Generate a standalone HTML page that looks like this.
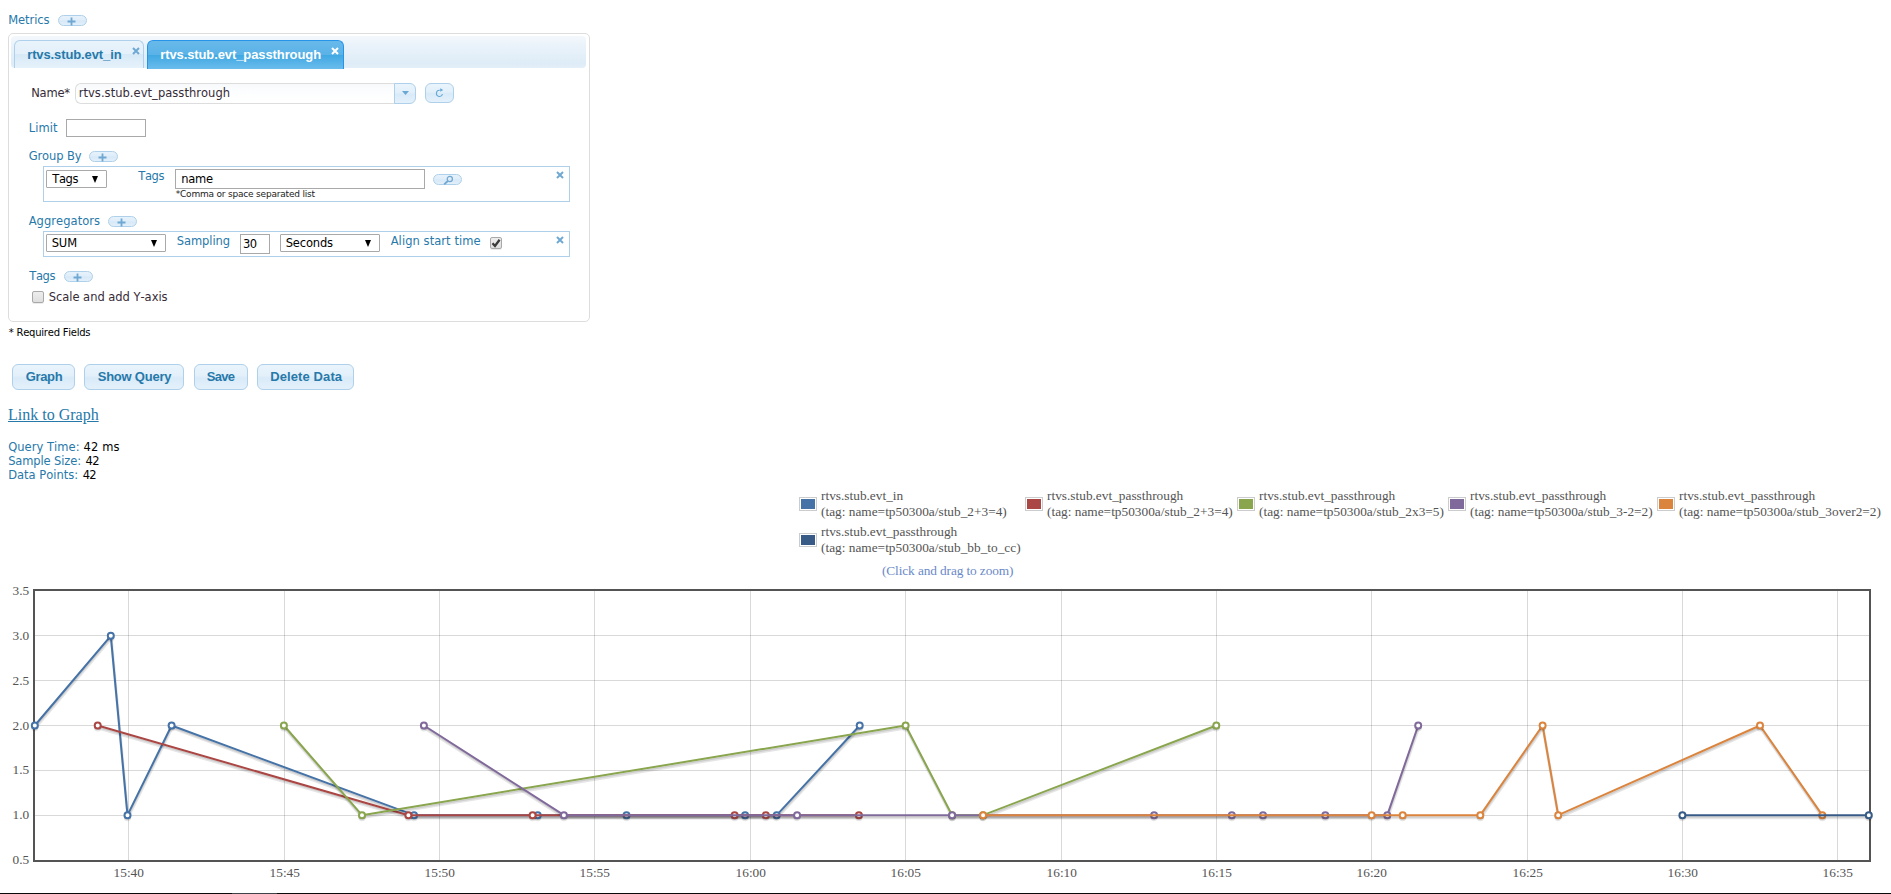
<!DOCTYPE html>
<html lang="en">
<head>
<meta charset="utf-8">
<title>KairosDB</title>
<style>
html,body{margin:0;padding:0;background:#fff;}
body{position:relative;width:1891px;height:894px;overflow:hidden;font-family:"DejaVu Sans","Liberation Sans",sans-serif;font-size:12px;}
*{box-sizing:border-box;}
.a{position:absolute;}
.t{position:absolute;white-space:pre;line-height:20px;margin:0;padding:0;font-kerning:none;}
ul,li{list-style:none;margin:0;padding:0;}
.panel{left:8px;top:33px;width:582px;height:289px;border:1px solid #ddd;border-radius:5px;background:#fff;}
.nav{left:11px;top:36px;width:575px;height:32px;border-radius:4px;background:linear-gradient(#f3f8fc 0%,#eaf3fa 30%,#deecf7 85%,#e3eff8 100%);}
.tab{top:40px;height:28px;border:1px solid #aed0ea;border-bottom:0;border-radius:6px 6px 0 0;background:linear-gradient(#e8f3fb 0%,#e4f0fa 49%,#d7e9f7 50%,#e6f2fb 100%);}
.tab.on{height:29px;border-color:#2694e8;background:linear-gradient(#68b9ea 0%,#5ab2e7 49%,#3fa8e2 50%,#6bbcec 100%);}
.pill{height:11px;width:29px;border:1px solid #aed0ea;border-radius:6px;background:linear-gradient(#e6f2fb 0%,#e0eefa 44%,#d7e8f7 54%,#e2f0fa 100%);}
.box{left:43px;width:527px;border:1px solid #aed0ea;background:#fff;}
.inp{border:1px solid #a9a9a9;background:#fff;}
.sel{border:1px solid #a9a9a9;background:#fff;height:18px;border-radius:1px;}
.sel i{position:absolute;right:7.7px;top:5px;width:0;height:0;border-left:3.8px solid transparent;border-right:3.8px solid transparent;border-top:7px solid #000;}
.cb{width:12px;height:12px;border:1px solid #a9a9a9;border-radius:2px;background:linear-gradient(#ededed,#dedede);box-shadow:0 1px 0 rgba(0,0,0,.08);}
.btn{top:364px;height:26px;border:1px solid #aed0ea;border-radius:6px;background:linear-gradient(#e9f4fc 0%,#e3f0fa 44%,#d9eaf8 54%,#e4f1fb 100%);}
.combo{left:75px;top:83px;width:320px;height:21px;border:1px solid #ddd;border-right:0;border-radius:6px 0 0 6px;background:linear-gradient(#f7f9fb,#fcfdfe 40%,#fff);}
.cbtn{left:394px;top:83px;width:22px;height:21px;border:1px solid #aed0ea;border-radius:0 6px 6px 0;background:linear-gradient(#e9f4fc 0%,#e3f0fa 44%,#d9eaf8 54%,#e4f1fb 100%);}
.rbtn{left:425px;top:83px;width:29px;height:20px;border:1px solid #aed0ea;border-radius:6px;background:linear-gradient(#e9f4fc 0%,#e3f0fa 44%,#d9eaf8 54%,#e4f1fb 100%);}
svg{position:absolute;overflow:visible;}
.sw{width:18px;height:14px;border:1px solid #ccc;padding:1px;background:#fff;}
.sw div{width:14px;height:10px;}

</style>
</head>
<body>
<div id="metricContainer">
<span class="t " style="left:8.2px;top:10px;font-family:'DejaVu Sans','Liberation Sans',sans-serif;font-size:11.5px;color:#2779aa;letter-spacing:-0.058px;">Metrics</span>
<div class="a pill" style="left:58px;top:15px"><svg width="9" height="9" viewBox="0 0 9 9" style="left:8.4px;top:1.4px"><path d="M3.6 0.5h1.8v3.1h3.1v1.8h-3.1v3.1h-1.8v-3.1h-3.1v-1.8h3.1z" fill="#6fa9d3"/></svg></div>
<div class="a panel"></div>
<div class="a nav"></div>
<ul>
<li class="a tab" style="left:14px;width:130px"></li><span class="t " style="left:27.2px;top:45px;font-family:'Liberation Sans','DejaVu Sans',sans-serif;font-size:13px;color:#2779aa;font-weight:700;letter-spacing:-0.113px;">rtvs.stub.evt_in</span><svg class="a" width="8" height="8" viewBox="0 0 8 8" style="left:131.6px;top:46.6px"><path d="M1 1L7 7M7 1L1 7" stroke="#6fa9d3" stroke-width="2" fill="none"/></svg>
<li class="a tab on" style="left:147px;width:197px"></li><span class="t " style="left:160.2px;top:45px;font-family:'Liberation Sans','DejaVu Sans',sans-serif;font-size:13px;color:#fff;font-weight:700;letter-spacing:-0.099px;">rtvs.stub.evt_passthrough</span><svg class="a" width="8" height="8" viewBox="0 0 8 8" style="left:330.6px;top:46.6px"><path d="M1 1L7 7M7 1L1 7" stroke="#fff" stroke-width="2" fill="none"/></svg>
</ul>
<span class="t " style="left:31.2px;top:83px;font-family:'DejaVu Sans','Liberation Sans',sans-serif;font-size:11.5px;color:#362b36;letter-spacing:-0.197px;">Name*</span>
<div class="a combo"></div>
<span class="t " style="left:78.7px;top:83px;font-family:'DejaVu Sans','Liberation Sans',sans-serif;font-size:11.5px;color:#362b36;letter-spacing:0.044px;">rtvs.stub.evt_passthrough</span>
<div class="a cbtn"><svg width="7" height="4" viewBox="0 0 7 4" style="left:7px;top:7px"><path d="M0 0h7L3.5 4z" fill="#6aa8d4"/></svg></div>
<div class="a rbtn"><svg width="10" height="11" viewBox="0 0 10 11" style="left:8px;top:3px"><path d="M5.8 3.3A3.1 3.1 0 1 0 8.5 7.2" stroke="#65a9d6" stroke-width="1.1" fill="none"/><path d="M6.2 1.2L9.2 3 6.2 4.8z" fill="#65a9d6"/></svg></div>
<span class="t " style="left:28.7px;top:118px;font-family:'DejaVu Sans','Liberation Sans',sans-serif;font-size:11.5px;color:#2779aa;letter-spacing:0.096px;">Limit</span>
<div class="a inp" style="left:66px;top:119px;width:80px;height:18px"></div>
<span class="t " style="left:28.7px;top:146px;font-family:'DejaVu Sans','Liberation Sans',sans-serif;font-size:11.5px;color:#2779aa;letter-spacing:-0.104px;">Group By</span>
<div class="a pill" style="left:89px;top:151px"><svg width="9" height="9" viewBox="0 0 9 9" style="left:8.4px;top:1.4px"><path d="M3.6 0.5h1.8v3.1h3.1v1.8h-3.1v3.1h-1.8v-3.1h-3.1v-1.8h3.1z" fill="#6fa9d3"/></svg></div>
<div class="a box" style="top:166px;height:36px"></div>
<div class="a sel" style="left:46px;top:170px;width:61px"><i></i></div>
<span class="t " style="left:52.2px;top:169px;font-family:'DejaVu Sans','Liberation Sans',sans-serif;font-size:11.5px;color:#000;letter-spacing:-0.325px;">Tags</span>
<span class="t " style="left:138.2px;top:166px;font-family:'DejaVu Sans','Liberation Sans',sans-serif;font-size:11.5px;color:#2779aa;letter-spacing:-0.325px;">Tags</span>
<div class="a inp" style="left:175px;top:169px;width:250px;height:20px"></div>
<span class="t " style="left:181.2px;top:169px;font-family:'DejaVu Sans','Liberation Sans',sans-serif;font-size:11.5px;color:#000;letter-spacing:-0.242px;">name</span>
<div class="a pill" style="left:433px;top:174px"><svg width="11" height="10" viewBox="0 0 11 10" style="left:9px;top:0px"><circle cx="6.8" cy="4" r="2.6" stroke="#72a7cf" stroke-width="1.2" fill="none"/><path d="M4.8 6L1.2 9.3" stroke="#72a7cf" stroke-width="1.8" fill="none"/></svg></div>
<span class="t " style="left:175.7px;top:184px;font-family:'DejaVu Sans','Liberation Sans',sans-serif;font-size:9px;color:#222;letter-spacing:-0.195px;">*Comma or space separated list</span>
<svg class="a" width="8" height="8" viewBox="0 0 8 8" style="left:555.6px;top:170.6px"><path d="M1 1L7 7M7 1L1 7" stroke="#6fa9d3" stroke-width="2" fill="none"/></svg>
<span class="t " style="left:28.7px;top:211px;font-family:'DejaVu Sans','Liberation Sans',sans-serif;font-size:11.5px;color:#2779aa;letter-spacing:0.051px;">Aggregators</span>
<div class="a pill" style="left:108px;top:216px"><svg width="9" height="9" viewBox="0 0 9 9" style="left:8.4px;top:1.4px"><path d="M3.6 0.5h1.8v3.1h3.1v1.8h-3.1v3.1h-1.8v-3.1h-3.1v-1.8h3.1z" fill="#6fa9d3"/></svg></div>
<div class="a box" style="top:231px;height:26px"></div>
<div class="a sel" style="left:46px;top:234px;width:120px"><i></i></div>
<span class="t " style="left:51.7px;top:233px;font-family:'DejaVu Sans','Liberation Sans',sans-serif;font-size:11.5px;color:#000;letter-spacing:-0.120px;">SUM</span>
<span class="t " style="left:176.7px;top:231px;font-family:'DejaVu Sans','Liberation Sans',sans-serif;font-size:11.5px;color:#2779aa;letter-spacing:-0.061px;">Sampling</span>
<div class="a inp" style="left:240px;top:234px;width:30px;height:20px"></div>
<span class="t " style="left:243.1px;top:234px;font-family:'DejaVu Sans','Liberation Sans',sans-serif;font-size:11.5px;color:#000;letter-spacing:-0.741px;">30</span>
<div class="a sel" style="left:280px;top:234px;width:100px"><i></i></div>
<span class="t " style="left:285.7px;top:233px;font-family:'DejaVu Sans','Liberation Sans',sans-serif;font-size:11.5px;color:#000;letter-spacing:-0.155px;">Seconds</span>
<span class="t " style="left:390.7px;top:231px;font-family:'DejaVu Sans','Liberation Sans',sans-serif;font-size:11.5px;color:#2779aa;letter-spacing:0.064px;">Align start time</span>
<div class="a cb" style="left:490px;top:237px"><svg width="10" height="10" viewBox="0 0 10 10" style="left:0px;top:0px"><path d="M1.5 5.2L4 8 8.6 1.8" stroke="#3a3a3a" stroke-width="2.3" fill="none"/></svg></div>
<svg class="a" width="8" height="8" viewBox="0 0 8 8" style="left:555.6px;top:235.6px"><path d="M1 1L7 7M7 1L1 7" stroke="#6fa9d3" stroke-width="2" fill="none"/></svg>
<span class="t " style="left:29.2px;top:266px;font-family:'DejaVu Sans','Liberation Sans',sans-serif;font-size:11.5px;color:#2779aa;letter-spacing:-0.325px;">Tags</span>
<div class="a pill" style="left:64px;top:271px"><svg width="9" height="9" viewBox="0 0 9 9" style="left:8.4px;top:1.4px"><path d="M3.6 0.5h1.8v3.1h3.1v1.8h-3.1v3.1h-1.8v-3.1h-3.1v-1.8h3.1z" fill="#6fa9d3"/></svg></div>
<div class="a cb" style="left:32px;top:291px"></div>
<span class="t " style="left:48.7px;top:287px;font-family:'DejaVu Sans','Liberation Sans',sans-serif;font-size:11.5px;color:#362b36;letter-spacing:-0.027px;">Scale and add Y-axis</span>
</div>
<span class="t " style="left:8.7px;top:323px;font-family:'DejaVu Sans','Liberation Sans',sans-serif;font-size:10px;color:#000;letter-spacing:-0.229px;">* Required Fields</span>
<div class="a btn" style="left:12px;width:63px"></div><span class="t " style="left:25.7px;top:367px;font-family:'Liberation Sans','DejaVu Sans',sans-serif;font-size:13px;color:#2779aa;font-weight:700;letter-spacing:-0.349px;">Graph</span>
<div class="a btn" style="left:84px;width:100px"></div><span class="t " style="left:97.7px;top:367px;font-family:'Liberation Sans','DejaVu Sans',sans-serif;font-size:13px;color:#2779aa;font-weight:700;letter-spacing:-0.218px;">Show Query</span>
<div class="a btn" style="left:194px;width:54px"></div><span class="t " style="left:206.7px;top:367px;font-family:'Liberation Sans','DejaVu Sans',sans-serif;font-size:13px;color:#2779aa;font-weight:700;letter-spacing:-0.658px;">Save</span>
<div class="a btn" style="left:257px;width:97px"></div><span class="t " style="left:270.2px;top:367px;font-family:'Liberation Sans','DejaVu Sans',sans-serif;font-size:13px;color:#2779aa;font-weight:700;letter-spacing:0.109px;">Delete Data</span>
<a class="t " style="left:8.0px;top:404.5px;font-family:'Liberation Serif','DejaVu Serif',serif;font-size:16px;color:#2779aa;text-decoration:underline;">Link to Graph</a>
<span class="t " style="left:8.2px;top:437px;font-family:'DejaVu Sans','Liberation Sans',sans-serif;font-size:11.5px;color:#2779aa;letter-spacing:0.042px;">Query Time:</span><span class="t " style="left:83.5px;top:437px;font-family:'DejaVu Sans','Liberation Sans',sans-serif;font-size:11.5px;color:#000;letter-spacing:0.129px;">42 ms</span>
<span class="t " style="left:8.2px;top:451px;font-family:'DejaVu Sans','Liberation Sans',sans-serif;font-size:11.5px;color:#2779aa;letter-spacing:-0.124px;">Sample Size:</span><span class="t " style="left:85.6px;top:451px;font-family:'DejaVu Sans','Liberation Sans',sans-serif;font-size:11.5px;color:#000;letter-spacing:-0.641px;">42</span>
<span class="t " style="left:8.2px;top:465px;font-family:'DejaVu Sans','Liberation Sans',sans-serif;font-size:11.5px;color:#2779aa;">Data Points:</span><span class="t " style="left:82.7px;top:465px;font-family:'DejaVu Sans','Liberation Sans',sans-serif;font-size:11.5px;color:#000;letter-spacing:-0.741px;">42</span>
<div id="graphLegend">
<div class="a sw" style="left:799px;top:497px"><div style="background:#4572a7"></div></div><span class="t " style="left:821px;top:486px;font-family:'Liberation Serif','DejaVu Serif',serif;font-size:13.333px;color:#545454;">rtvs.stub.evt_in</span><span class="t " style="left:821px;top:502px;font-family:'Liberation Serif','DejaVu Serif',serif;font-size:13.333px;color:#545454;">(tag: name=tp50300a/stub_2+3=4)</span>
<div class="a sw" style="left:1025px;top:497px"><div style="background:#aa4643"></div></div><span class="t " style="left:1047px;top:486px;font-family:'Liberation Serif','DejaVu Serif',serif;font-size:13.333px;color:#545454;">rtvs.stub.evt_passthrough</span><span class="t " style="left:1047px;top:502px;font-family:'Liberation Serif','DejaVu Serif',serif;font-size:13.333px;color:#545454;">(tag: name=tp50300a/stub_2+3=4)</span>
<div class="a sw" style="left:1237px;top:497px"><div style="background:#89a54e"></div></div><span class="t " style="left:1259px;top:486px;font-family:'Liberation Serif','DejaVu Serif',serif;font-size:13.333px;color:#545454;">rtvs.stub.evt_passthrough</span><span class="t " style="left:1259px;top:502px;font-family:'Liberation Serif','DejaVu Serif',serif;font-size:13.333px;color:#545454;">(tag: name=tp50300a/stub_2x3=5)</span>
<div class="a sw" style="left:1448px;top:497px"><div style="background:#80699b"></div></div><span class="t " style="left:1470px;top:486px;font-family:'Liberation Serif','DejaVu Serif',serif;font-size:13.333px;color:#545454;">rtvs.stub.evt_passthrough</span><span class="t " style="left:1470px;top:502px;font-family:'Liberation Serif','DejaVu Serif',serif;font-size:13.333px;color:#545454;">(tag: name=tp50300a/stub_3-2=2)</span>
<div class="a sw" style="left:1657px;top:497px"><div style="background:#db843d"></div></div><span class="t " style="left:1679px;top:486px;font-family:'Liberation Serif','DejaVu Serif',serif;font-size:13.333px;color:#545454;">rtvs.stub.evt_passthrough</span><span class="t " style="left:1679px;top:502px;font-family:'Liberation Serif','DejaVu Serif',serif;font-size:13.333px;color:#545454;">(tag: name=tp50300a/stub_3over2=2)</span>
<div class="a sw" style="left:799px;top:533px"><div style="background:#375b86"></div></div><span class="t " style="left:821px;top:522px;font-family:'Liberation Serif','DejaVu Serif',serif;font-size:13.333px;color:#545454;">rtvs.stub.evt_passthrough</span><span class="t " style="left:821px;top:538px;font-family:'Liberation Serif','DejaVu Serif',serif;font-size:13.333px;color:#545454;">(tag: name=tp50300a/stub_bb_to_cc)</span>
</div>
<span class="t " style="left:882px;top:560.5px;font-family:'Liberation Serif','DejaVu Serif',serif;font-size:13.333px;color:#6a89c8;letter-spacing:-0.109px;">(Click and drag to zoom)</span>
<svg class="a" id="flotChart" width="1891" height="894" viewBox="0 0 1891 894" style="left:0;top:0">
<g fill="#545454" fill-opacity=".22">
<rect x="128" y="591" width="1" height="269"/>
<rect x="284" y="591" width="1" height="269"/>
<rect x="439" y="591" width="1" height="269"/>
<rect x="594" y="591" width="1" height="269"/>
<rect x="750" y="591" width="1" height="269"/>
<rect x="905" y="591" width="1" height="269"/>
<rect x="1061" y="591" width="1" height="269"/>
<rect x="1216" y="591" width="1" height="269"/>
<rect x="1371" y="591" width="1" height="269"/>
<rect x="1527" y="591" width="1" height="269"/>
<rect x="1682" y="591" width="1" height="269"/>
<rect x="1837" y="591" width="1" height="269"/>
<rect x="35" y="635" width="1834" height="1"/>
<rect x="35" y="680" width="1834" height="1"/>
<rect x="35" y="725" width="1834" height="1"/>
<rect x="35" y="770" width="1834" height="1"/>
<rect x="35" y="815" width="1834" height="1"/>
</g>
<rect x="34" y="590" width="1836" height="271" fill="none" stroke="#545454" stroke-width="2"/>
<g fill="none" stroke-linejoin="round">
<polyline points="35.23,727.96 111.23,638.29 127.93,817.63 172.03,727.96 414.43,817.63 538.13,817.63 626.93,817.63 745.53,817.63 777.13,817.63 860.13,727.96" stroke="#000" stroke-opacity=".1" stroke-width="3"/>
<polyline points="35.1,727.22 111.1,637.55 127.8,816.89 171.9,727.22 414.3,816.89 538.0,816.89 626.8,816.89 745.4,816.89 777.0,816.89 860.0,727.22" stroke="#000" stroke-opacity=".1" stroke-width="1.5"/>
<polyline points="34.8,725.5 110.8,635.83 127.5,815.17 171.6,725.5 414.0,815.17 537.7,815.17 626.5,815.17 745.1,815.17 776.7,815.17 859.7,725.5" stroke="#4572a7" stroke-width="2"/>
<path d="M31.8 727.75A3 3 0 0 0 37.8 727.75" stroke="#000" stroke-opacity="0.1" stroke-width="1.5"/>
<path d="M31.8 726.25A3 3 0 0 0 37.8 726.25" stroke="#000" stroke-opacity="0.2" stroke-width="1.5"/>
<path d="M107.8 638.08A3 3 0 0 0 113.8 638.08" stroke="#000" stroke-opacity="0.1" stroke-width="1.5"/>
<path d="M107.8 636.58A3 3 0 0 0 113.8 636.58" stroke="#000" stroke-opacity="0.2" stroke-width="1.5"/>
<path d="M124.5 817.42A3 3 0 0 0 130.5 817.42" stroke="#000" stroke-opacity="0.1" stroke-width="1.5"/>
<path d="M124.5 815.92A3 3 0 0 0 130.5 815.92" stroke="#000" stroke-opacity="0.2" stroke-width="1.5"/>
<path d="M168.6 727.75A3 3 0 0 0 174.6 727.75" stroke="#000" stroke-opacity="0.1" stroke-width="1.5"/>
<path d="M168.6 726.25A3 3 0 0 0 174.6 726.25" stroke="#000" stroke-opacity="0.2" stroke-width="1.5"/>
<path d="M411.0 817.42A3 3 0 0 0 417.0 817.42" stroke="#000" stroke-opacity="0.1" stroke-width="1.5"/>
<path d="M411.0 815.92A3 3 0 0 0 417.0 815.92" stroke="#000" stroke-opacity="0.2" stroke-width="1.5"/>
<path d="M534.7 817.42A3 3 0 0 0 540.7 817.42" stroke="#000" stroke-opacity="0.1" stroke-width="1.5"/>
<path d="M534.7 815.92A3 3 0 0 0 540.7 815.92" stroke="#000" stroke-opacity="0.2" stroke-width="1.5"/>
<path d="M623.5 817.42A3 3 0 0 0 629.5 817.42" stroke="#000" stroke-opacity="0.1" stroke-width="1.5"/>
<path d="M623.5 815.92A3 3 0 0 0 629.5 815.92" stroke="#000" stroke-opacity="0.2" stroke-width="1.5"/>
<path d="M742.1 817.42A3 3 0 0 0 748.1 817.42" stroke="#000" stroke-opacity="0.1" stroke-width="1.5"/>
<path d="M742.1 815.92A3 3 0 0 0 748.1 815.92" stroke="#000" stroke-opacity="0.2" stroke-width="1.5"/>
<path d="M773.7 817.42A3 3 0 0 0 779.7 817.42" stroke="#000" stroke-opacity="0.1" stroke-width="1.5"/>
<path d="M773.7 815.92A3 3 0 0 0 779.7 815.92" stroke="#000" stroke-opacity="0.2" stroke-width="1.5"/>
<path d="M856.7 727.75A3 3 0 0 0 862.7 727.75" stroke="#000" stroke-opacity="0.1" stroke-width="1.5"/>
<path d="M856.7 726.25A3 3 0 0 0 862.7 726.25" stroke="#000" stroke-opacity="0.2" stroke-width="1.5"/>
<circle cx="34.8" cy="725.5" r="3" fill="#fff" stroke="#4572a7" stroke-width="2"/>
<circle cx="110.8" cy="635.83" r="3" fill="#fff" stroke="#4572a7" stroke-width="2"/>
<circle cx="127.5" cy="815.17" r="3" fill="#fff" stroke="#4572a7" stroke-width="2"/>
<circle cx="171.6" cy="725.5" r="3" fill="#fff" stroke="#4572a7" stroke-width="2"/>
<circle cx="414.0" cy="815.17" r="3" fill="#fff" stroke="#4572a7" stroke-width="2"/>
<circle cx="537.7" cy="815.17" r="3" fill="#fff" stroke="#4572a7" stroke-width="2"/>
<circle cx="626.5" cy="815.17" r="3" fill="#fff" stroke="#4572a7" stroke-width="2"/>
<circle cx="745.1" cy="815.17" r="3" fill="#fff" stroke="#4572a7" stroke-width="2"/>
<circle cx="776.7" cy="815.17" r="3" fill="#fff" stroke="#4572a7" stroke-width="2"/>
<circle cx="859.7" cy="725.5" r="3" fill="#fff" stroke="#4572a7" stroke-width="2"/>
</g>
<g fill="none" stroke-linejoin="round">
<polyline points="98.13,727.96 408.83,817.63 533.03,817.63 735.03,817.63 766.23,817.63 859.33,817.63" stroke="#000" stroke-opacity=".1" stroke-width="3"/>
<polyline points="98.0,727.22 408.7,816.89 532.9,816.89 734.9,816.89 766.1,816.89 859.2,816.89" stroke="#000" stroke-opacity=".1" stroke-width="1.5"/>
<polyline points="97.7,725.5 408.4,815.17 532.6,815.17 734.6,815.17 765.8,815.17 858.9,815.17" stroke="#aa4643" stroke-width="2"/>
<path d="M94.7 727.75A3 3 0 0 0 100.7 727.75" stroke="#000" stroke-opacity="0.1" stroke-width="1.5"/>
<path d="M94.7 726.25A3 3 0 0 0 100.7 726.25" stroke="#000" stroke-opacity="0.2" stroke-width="1.5"/>
<path d="M405.4 817.42A3 3 0 0 0 411.4 817.42" stroke="#000" stroke-opacity="0.1" stroke-width="1.5"/>
<path d="M405.4 815.92A3 3 0 0 0 411.4 815.92" stroke="#000" stroke-opacity="0.2" stroke-width="1.5"/>
<path d="M529.6 817.42A3 3 0 0 0 535.6 817.42" stroke="#000" stroke-opacity="0.1" stroke-width="1.5"/>
<path d="M529.6 815.92A3 3 0 0 0 535.6 815.92" stroke="#000" stroke-opacity="0.2" stroke-width="1.5"/>
<path d="M731.6 817.42A3 3 0 0 0 737.6 817.42" stroke="#000" stroke-opacity="0.1" stroke-width="1.5"/>
<path d="M731.6 815.92A3 3 0 0 0 737.6 815.92" stroke="#000" stroke-opacity="0.2" stroke-width="1.5"/>
<path d="M762.8 817.42A3 3 0 0 0 768.8 817.42" stroke="#000" stroke-opacity="0.1" stroke-width="1.5"/>
<path d="M762.8 815.92A3 3 0 0 0 768.8 815.92" stroke="#000" stroke-opacity="0.2" stroke-width="1.5"/>
<path d="M855.9 817.42A3 3 0 0 0 861.9 817.42" stroke="#000" stroke-opacity="0.1" stroke-width="1.5"/>
<path d="M855.9 815.92A3 3 0 0 0 861.9 815.92" stroke="#000" stroke-opacity="0.2" stroke-width="1.5"/>
<circle cx="97.7" cy="725.5" r="3" fill="#fff" stroke="#aa4643" stroke-width="2"/>
<circle cx="408.4" cy="815.17" r="3" fill="#fff" stroke="#aa4643" stroke-width="2"/>
<circle cx="532.6" cy="815.17" r="3" fill="#fff" stroke="#aa4643" stroke-width="2"/>
<circle cx="734.6" cy="815.17" r="3" fill="#fff" stroke="#aa4643" stroke-width="2"/>
<circle cx="765.8" cy="815.17" r="3" fill="#fff" stroke="#aa4643" stroke-width="2"/>
<circle cx="858.9" cy="815.17" r="3" fill="#fff" stroke="#aa4643" stroke-width="2"/>
</g>
<g fill="none" stroke-linejoin="round">
<polyline points="284.33,727.96 362.43,817.63 906.03,727.96 952.53,817.63 983.53,817.63 1216.73,727.96" stroke="#000" stroke-opacity=".1" stroke-width="3"/>
<polyline points="284.2,727.22 362.3,816.89 905.9,727.22 952.4,816.89 983.4,816.89 1216.6,727.22" stroke="#000" stroke-opacity=".1" stroke-width="1.5"/>
<polyline points="283.9,725.5 362.0,815.17 905.6,725.5 952.1,815.17 983.1,815.17 1216.3,725.5" stroke="#89a54e" stroke-width="2"/>
<path d="M280.9 727.75A3 3 0 0 0 286.9 727.75" stroke="#000" stroke-opacity="0.1" stroke-width="1.5"/>
<path d="M280.9 726.25A3 3 0 0 0 286.9 726.25" stroke="#000" stroke-opacity="0.2" stroke-width="1.5"/>
<path d="M359.0 817.42A3 3 0 0 0 365.0 817.42" stroke="#000" stroke-opacity="0.1" stroke-width="1.5"/>
<path d="M359.0 815.92A3 3 0 0 0 365.0 815.92" stroke="#000" stroke-opacity="0.2" stroke-width="1.5"/>
<path d="M902.6 727.75A3 3 0 0 0 908.6 727.75" stroke="#000" stroke-opacity="0.1" stroke-width="1.5"/>
<path d="M902.6 726.25A3 3 0 0 0 908.6 726.25" stroke="#000" stroke-opacity="0.2" stroke-width="1.5"/>
<path d="M949.1 817.42A3 3 0 0 0 955.1 817.42" stroke="#000" stroke-opacity="0.1" stroke-width="1.5"/>
<path d="M949.1 815.92A3 3 0 0 0 955.1 815.92" stroke="#000" stroke-opacity="0.2" stroke-width="1.5"/>
<path d="M980.1 817.42A3 3 0 0 0 986.1 817.42" stroke="#000" stroke-opacity="0.1" stroke-width="1.5"/>
<path d="M980.1 815.92A3 3 0 0 0 986.1 815.92" stroke="#000" stroke-opacity="0.2" stroke-width="1.5"/>
<path d="M1213.3 727.75A3 3 0 0 0 1219.3 727.75" stroke="#000" stroke-opacity="0.1" stroke-width="1.5"/>
<path d="M1213.3 726.25A3 3 0 0 0 1219.3 726.25" stroke="#000" stroke-opacity="0.2" stroke-width="1.5"/>
<circle cx="283.9" cy="725.5" r="3" fill="#fff" stroke="#89a54e" stroke-width="2"/>
<circle cx="362.0" cy="815.17" r="3" fill="#fff" stroke="#89a54e" stroke-width="2"/>
<circle cx="905.6" cy="725.5" r="3" fill="#fff" stroke="#89a54e" stroke-width="2"/>
<circle cx="952.1" cy="815.17" r="3" fill="#fff" stroke="#89a54e" stroke-width="2"/>
<circle cx="983.1" cy="815.17" r="3" fill="#fff" stroke="#89a54e" stroke-width="2"/>
<circle cx="1216.3" cy="725.5" r="3" fill="#fff" stroke="#89a54e" stroke-width="2"/>
</g>
<g fill="none" stroke-linejoin="round">
<polyline points="424.33,727.96 564.33,817.63 797.53,817.63 952.53,817.63 1154.53,817.63 1232.23,817.63 1263.43,817.63 1325.73,817.63 1387.73,817.63 1418.63,727.96" stroke="#000" stroke-opacity=".1" stroke-width="3"/>
<polyline points="424.2,727.22 564.2,816.89 797.4,816.89 952.4,816.89 1154.4,816.89 1232.1,816.89 1263.3,816.89 1325.6,816.89 1387.6,816.89 1418.5,727.22" stroke="#000" stroke-opacity=".1" stroke-width="1.5"/>
<polyline points="423.9,725.5 563.9,815.17 797.1,815.17 952.1,815.17 1154.1,815.17 1231.8,815.17 1263.0,815.17 1325.3,815.17 1387.3,815.17 1418.2,725.5" stroke="#80699b" stroke-width="2"/>
<path d="M420.9 727.75A3 3 0 0 0 426.9 727.75" stroke="#000" stroke-opacity="0.1" stroke-width="1.5"/>
<path d="M420.9 726.25A3 3 0 0 0 426.9 726.25" stroke="#000" stroke-opacity="0.2" stroke-width="1.5"/>
<path d="M560.9 817.42A3 3 0 0 0 566.9 817.42" stroke="#000" stroke-opacity="0.1" stroke-width="1.5"/>
<path d="M560.9 815.92A3 3 0 0 0 566.9 815.92" stroke="#000" stroke-opacity="0.2" stroke-width="1.5"/>
<path d="M794.1 817.42A3 3 0 0 0 800.1 817.42" stroke="#000" stroke-opacity="0.1" stroke-width="1.5"/>
<path d="M794.1 815.92A3 3 0 0 0 800.1 815.92" stroke="#000" stroke-opacity="0.2" stroke-width="1.5"/>
<path d="M949.1 817.42A3 3 0 0 0 955.1 817.42" stroke="#000" stroke-opacity="0.1" stroke-width="1.5"/>
<path d="M949.1 815.92A3 3 0 0 0 955.1 815.92" stroke="#000" stroke-opacity="0.2" stroke-width="1.5"/>
<path d="M1151.1 817.42A3 3 0 0 0 1157.1 817.42" stroke="#000" stroke-opacity="0.1" stroke-width="1.5"/>
<path d="M1151.1 815.92A3 3 0 0 0 1157.1 815.92" stroke="#000" stroke-opacity="0.2" stroke-width="1.5"/>
<path d="M1228.8 817.42A3 3 0 0 0 1234.8 817.42" stroke="#000" stroke-opacity="0.1" stroke-width="1.5"/>
<path d="M1228.8 815.92A3 3 0 0 0 1234.8 815.92" stroke="#000" stroke-opacity="0.2" stroke-width="1.5"/>
<path d="M1260.0 817.42A3 3 0 0 0 1266.0 817.42" stroke="#000" stroke-opacity="0.1" stroke-width="1.5"/>
<path d="M1260.0 815.92A3 3 0 0 0 1266.0 815.92" stroke="#000" stroke-opacity="0.2" stroke-width="1.5"/>
<path d="M1322.3 817.42A3 3 0 0 0 1328.3 817.42" stroke="#000" stroke-opacity="0.1" stroke-width="1.5"/>
<path d="M1322.3 815.92A3 3 0 0 0 1328.3 815.92" stroke="#000" stroke-opacity="0.2" stroke-width="1.5"/>
<path d="M1384.3 817.42A3 3 0 0 0 1390.3 817.42" stroke="#000" stroke-opacity="0.1" stroke-width="1.5"/>
<path d="M1384.3 815.92A3 3 0 0 0 1390.3 815.92" stroke="#000" stroke-opacity="0.2" stroke-width="1.5"/>
<path d="M1415.2 727.75A3 3 0 0 0 1421.2 727.75" stroke="#000" stroke-opacity="0.1" stroke-width="1.5"/>
<path d="M1415.2 726.25A3 3 0 0 0 1421.2 726.25" stroke="#000" stroke-opacity="0.2" stroke-width="1.5"/>
<circle cx="423.9" cy="725.5" r="3" fill="#fff" stroke="#80699b" stroke-width="2"/>
<circle cx="563.9" cy="815.17" r="3" fill="#fff" stroke="#80699b" stroke-width="2"/>
<circle cx="797.1" cy="815.17" r="3" fill="#fff" stroke="#80699b" stroke-width="2"/>
<circle cx="952.1" cy="815.17" r="3" fill="#fff" stroke="#80699b" stroke-width="2"/>
<circle cx="1154.1" cy="815.17" r="3" fill="#fff" stroke="#80699b" stroke-width="2"/>
<circle cx="1231.8" cy="815.17" r="3" fill="#fff" stroke="#80699b" stroke-width="2"/>
<circle cx="1263.0" cy="815.17" r="3" fill="#fff" stroke="#80699b" stroke-width="2"/>
<circle cx="1325.3" cy="815.17" r="3" fill="#fff" stroke="#80699b" stroke-width="2"/>
<circle cx="1387.3" cy="815.17" r="3" fill="#fff" stroke="#80699b" stroke-width="2"/>
<circle cx="1418.2" cy="725.5" r="3" fill="#fff" stroke="#80699b" stroke-width="2"/>
</g>
<g fill="none" stroke-linejoin="round">
<polyline points="983.53,817.63 1372.03,817.63 1403.13,817.63 1480.73,817.63 1543.03,727.96 1558.63,817.63 1760.43,727.96 1822.73,817.63" stroke="#000" stroke-opacity=".1" stroke-width="3"/>
<polyline points="983.4,816.89 1371.9,816.89 1403.0,816.89 1480.6,816.89 1542.9,727.22 1558.5,816.89 1760.3,727.22 1822.6,816.89" stroke="#000" stroke-opacity=".1" stroke-width="1.5"/>
<polyline points="983.1,815.17 1371.6,815.17 1402.7,815.17 1480.3,815.17 1542.6,725.5 1558.2,815.17 1760.0,725.5 1822.3,815.17" stroke="#db843d" stroke-width="2"/>
<path d="M980.1 817.42A3 3 0 0 0 986.1 817.42" stroke="#000" stroke-opacity="0.1" stroke-width="1.5"/>
<path d="M980.1 815.92A3 3 0 0 0 986.1 815.92" stroke="#000" stroke-opacity="0.2" stroke-width="1.5"/>
<path d="M1368.6 817.42A3 3 0 0 0 1374.6 817.42" stroke="#000" stroke-opacity="0.1" stroke-width="1.5"/>
<path d="M1368.6 815.92A3 3 0 0 0 1374.6 815.92" stroke="#000" stroke-opacity="0.2" stroke-width="1.5"/>
<path d="M1399.7 817.42A3 3 0 0 0 1405.7 817.42" stroke="#000" stroke-opacity="0.1" stroke-width="1.5"/>
<path d="M1399.7 815.92A3 3 0 0 0 1405.7 815.92" stroke="#000" stroke-opacity="0.2" stroke-width="1.5"/>
<path d="M1477.3 817.42A3 3 0 0 0 1483.3 817.42" stroke="#000" stroke-opacity="0.1" stroke-width="1.5"/>
<path d="M1477.3 815.92A3 3 0 0 0 1483.3 815.92" stroke="#000" stroke-opacity="0.2" stroke-width="1.5"/>
<path d="M1539.6 727.75A3 3 0 0 0 1545.6 727.75" stroke="#000" stroke-opacity="0.1" stroke-width="1.5"/>
<path d="M1539.6 726.25A3 3 0 0 0 1545.6 726.25" stroke="#000" stroke-opacity="0.2" stroke-width="1.5"/>
<path d="M1555.2 817.42A3 3 0 0 0 1561.2 817.42" stroke="#000" stroke-opacity="0.1" stroke-width="1.5"/>
<path d="M1555.2 815.92A3 3 0 0 0 1561.2 815.92" stroke="#000" stroke-opacity="0.2" stroke-width="1.5"/>
<path d="M1757.0 727.75A3 3 0 0 0 1763.0 727.75" stroke="#000" stroke-opacity="0.1" stroke-width="1.5"/>
<path d="M1757.0 726.25A3 3 0 0 0 1763.0 726.25" stroke="#000" stroke-opacity="0.2" stroke-width="1.5"/>
<path d="M1819.3 817.42A3 3 0 0 0 1825.3 817.42" stroke="#000" stroke-opacity="0.1" stroke-width="1.5"/>
<path d="M1819.3 815.92A3 3 0 0 0 1825.3 815.92" stroke="#000" stroke-opacity="0.2" stroke-width="1.5"/>
<circle cx="983.1" cy="815.17" r="3" fill="#fff" stroke="#db843d" stroke-width="2"/>
<circle cx="1371.6" cy="815.17" r="3" fill="#fff" stroke="#db843d" stroke-width="2"/>
<circle cx="1402.7" cy="815.17" r="3" fill="#fff" stroke="#db843d" stroke-width="2"/>
<circle cx="1480.3" cy="815.17" r="3" fill="#fff" stroke="#db843d" stroke-width="2"/>
<circle cx="1542.6" cy="725.5" r="3" fill="#fff" stroke="#db843d" stroke-width="2"/>
<circle cx="1558.2" cy="815.17" r="3" fill="#fff" stroke="#db843d" stroke-width="2"/>
<circle cx="1760.0" cy="725.5" r="3" fill="#fff" stroke="#db843d" stroke-width="2"/>
<circle cx="1822.3" cy="815.17" r="3" fill="#fff" stroke="#db843d" stroke-width="2"/>
</g>
<g fill="none" stroke-linejoin="round">
<polyline points="1682.83,817.63 1869.23,817.63" stroke="#000" stroke-opacity=".1" stroke-width="3"/>
<polyline points="1682.7,816.89 1869.1,816.89" stroke="#000" stroke-opacity=".1" stroke-width="1.5"/>
<polyline points="1682.4,815.17 1868.8,815.17" stroke="#375b86" stroke-width="2"/>
<path d="M1679.4 817.42A3 3 0 0 0 1685.4 817.42" stroke="#000" stroke-opacity="0.1" stroke-width="1.5"/>
<path d="M1679.4 815.92A3 3 0 0 0 1685.4 815.92" stroke="#000" stroke-opacity="0.2" stroke-width="1.5"/>
<path d="M1865.8 817.42A3 3 0 0 0 1871.8 817.42" stroke="#000" stroke-opacity="0.1" stroke-width="1.5"/>
<path d="M1865.8 815.92A3 3 0 0 0 1871.8 815.92" stroke="#000" stroke-opacity="0.2" stroke-width="1.5"/>
<circle cx="1682.4" cy="815.17" r="3" fill="#fff" stroke="#375b86" stroke-width="2"/>
<circle cx="1868.8" cy="815.17" r="3" fill="#fff" stroke="#375b86" stroke-width="2"/>
</g>
</svg>
<div id="axisLabels">
<span class="t " style="left:12.6px;top:581px;font-family:'Liberation Serif','DejaVu Serif',serif;font-size:13.333px;color:#545454;">3.5</span>
<span class="t " style="left:12.6px;top:626px;font-family:'Liberation Serif','DejaVu Serif',serif;font-size:13.333px;color:#545454;">3.0</span>
<span class="t " style="left:12.6px;top:671px;font-family:'Liberation Serif','DejaVu Serif',serif;font-size:13.333px;color:#545454;">2.5</span>
<span class="t " style="left:12.6px;top:716px;font-family:'Liberation Serif','DejaVu Serif',serif;font-size:13.333px;color:#545454;">2.0</span>
<span class="t " style="left:12.6px;top:760px;font-family:'Liberation Serif','DejaVu Serif',serif;font-size:13.333px;color:#545454;">1.5</span>
<span class="t " style="left:12.6px;top:805px;font-family:'Liberation Serif','DejaVu Serif',serif;font-size:13.333px;color:#545454;">1.0</span>
<span class="t " style="left:12.6px;top:850px;font-family:'Liberation Serif','DejaVu Serif',serif;font-size:13.333px;color:#545454;">0.5</span>
<span class="t " style="left:113.6px;top:863px;font-family:'Liberation Serif','DejaVu Serif',serif;font-size:13.333px;color:#545454;">15:40</span>
<span class="t " style="left:269.6px;top:863px;font-family:'Liberation Serif','DejaVu Serif',serif;font-size:13.333px;color:#545454;">15:45</span>
<span class="t " style="left:424.6px;top:863px;font-family:'Liberation Serif','DejaVu Serif',serif;font-size:13.333px;color:#545454;">15:50</span>
<span class="t " style="left:579.6px;top:863px;font-family:'Liberation Serif','DejaVu Serif',serif;font-size:13.333px;color:#545454;">15:55</span>
<span class="t " style="left:735.6px;top:863px;font-family:'Liberation Serif','DejaVu Serif',serif;font-size:13.333px;color:#545454;">16:00</span>
<span class="t " style="left:890.6px;top:863px;font-family:'Liberation Serif','DejaVu Serif',serif;font-size:13.333px;color:#545454;">16:05</span>
<span class="t " style="left:1046.6px;top:863px;font-family:'Liberation Serif','DejaVu Serif',serif;font-size:13.333px;color:#545454;">16:10</span>
<span class="t " style="left:1201.6px;top:863px;font-family:'Liberation Serif','DejaVu Serif',serif;font-size:13.333px;color:#545454;">16:15</span>
<span class="t " style="left:1356.6px;top:863px;font-family:'Liberation Serif','DejaVu Serif',serif;font-size:13.333px;color:#545454;">16:20</span>
<span class="t " style="left:1512.6px;top:863px;font-family:'Liberation Serif','DejaVu Serif',serif;font-size:13.333px;color:#545454;">16:25</span>
<span class="t " style="left:1667.6px;top:863px;font-family:'Liberation Serif','DejaVu Serif',serif;font-size:13.333px;color:#545454;">16:30</span>
<span class="t " style="left:1822.6px;top:863px;font-family:'Liberation Serif','DejaVu Serif',serif;font-size:13.333px;color:#545454;">16:35</span>
</div>
<div class="a" style="left:0;top:893px;width:1891px;height:1px;background:#0a0a0a"></div>
<div class="a" style="left:232px;top:893px;width:45px;height:1px;background:#3d4348"></div>
</body>
</html>
